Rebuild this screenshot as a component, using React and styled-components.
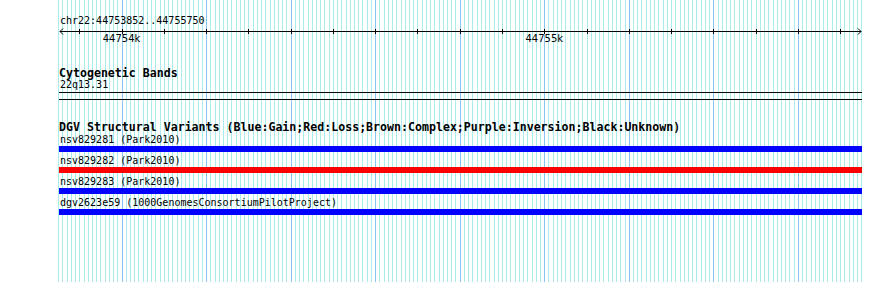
import React from "react";
import styled, { createGlobalStyle } from "styled-components";

const START = 44753852;
const END = 44755750;
const LEFT = 59;
const SCALE = 0.4227;

const toX = (bp) => LEFT + (bp - START) * SCALE;

const minorLines = [];
for (let bp = 44753850; bp <= 44755750; bp += 10) {
  minorLines.push(Math.round(toX(bp)));
}
const majorLines = [];
for (let bp = 44754000; bp <= 44755750; bp += 200) {
  majorLines.push(Math.round(toX(bp)));
}
const ticks = [];
for (let bp = 44753900; bp <= 44755700; bp += 100) {
  ticks.push(Math.round(toX(bp)) - LEFT);
}
const tickLabels = [
  { text: "44754k", bp: 44754000 },
  { text: "44755k", bp: 44755000 },
];

const variants = [
  { id: "nsv829281", source: "Park2010", color: "#0000ff" },
  { id: "nsv829282", source: "Park2010", color: "#ff0000" },
  { id: "nsv829283", source: "Park2010", color: "#0000ff" },
  { id: "dgv2623e59", source: "1000GenomesConsortiumPilotProject", color: "#0000ff" },
];

const GlobalStyle = createGlobalStyle`
  html, body {
    margin: 0;
    padding: 0;
    background: #ffffff;
  }
  body {
    font-family: "DejaVu Sans Mono", "Liberation Mono", monospace;
    color: #000000;
  }
`;

function Grid() {
  return (
    <GridSvg width="890" height="282">
      {minorLines.map((x) => (
        <line key={"m" + x} x1={x + 0.5} x2={x + 0.5} y1="0" y2="282" stroke="#a9ecee" />
      ))}
      {majorLines.map((x) => (
        <line key={"M" + x} x1={x + 0.5} x2={x + 0.5} y1="0" y2="282" stroke="#86c6f2" />
      ))}
    </GridSvg>
  );
}

function Ruler() {
  return (
    <RulerBox>
      <SmallText>chr22:44753852..44755750</SmallText>
      <AxisSvg width="803" height="6">
        <line x1="1" x2="802" y1="4.5" y2="4.5" stroke="#000" />
        <polyline points="4,1.5 1,4.5 4,7.5" fill="none" stroke="#000" />
        <polyline points="799,1.5 802,4.5 799,7.5" fill="none" stroke="#000" />
        {ticks.map((x) => (
          <line key={x} x1={x + 0.5} x2={x + 0.5} y1="2" y2="7" stroke="#000" />
        ))}
      </AxisSvg>
      <TickRow>
        {tickLabels.map((t) => (
          <TickLabel key={t.text} style={{ left: toX(t.bp) - LEFT }}>
            {t.text}
          </TickLabel>
        ))}
      </TickRow>
    </RulerBox>
  );
}

export default function App() {
  return (
    <>
      <GlobalStyle />
      <Canvas>
        <Grid />
        <Content>
          <Ruler />
          <Track $top={22}>
            <TrackTitle>Cytogenetic Bands</TrackTitle>
            <SmallText>22q13.31</SmallText>
            <Rule $gap={1} />
            <Rule $gap={6} />
          </Track>
          <Track $top={21}>
            <TrackTitle>
              DGV Structural Variants (Blue:Gain;Red:Loss;Brown:Complex;Purple:Inversion;Black:Unknown)
            </TrackTitle>
            <Rows>
              {variants.map((v) => (
                <Row key={v.id}>
                  <SmallText>
                    {v.id} ({v.source})
                  </SmallText>
                  <Bar $color={v.color} />
                </Row>
              ))}
            </Rows>
          </Track>
        </Content>
      </Canvas>
    </>
  );
}

const Canvas = styled.div`
  position: relative;
  width: 890px;
  height: 282px;
  overflow: hidden;
  background: #ffffff;
`;

const GridSvg = styled.svg`
  position: absolute;
  left: 0;
  top: 0;
  display: block;
`;

const Content = styled.div`
  position: relative;
  margin-left: ${LEFT}px;
  width: 803px;
  display: flex;
  flex-direction: column;
`;

const RulerBox = styled.div`
  height: 45px;
  padding-top: 15px;
  box-sizing: border-box;
  display: flex;
  flex-direction: column;
`;

const SmallText = styled.div`
  font-size: 10px;
  line-height: 12px;
  height: 12px;
  white-space: nowrap;
  padding-left: 1px;
`;

const AxisSvg = styled.svg`
  display: block;
  overflow: visible;
`;

const TickRow = styled.div`
  position: relative;
  height: 12px;
`;

const TickLabel = styled.span`
  position: absolute;
  top: 0;
  transform: translateX(-50%);
  font-family: "DejaVu Sans", "Liberation Sans", sans-serif;
  font-size: 10px;
  line-height: 12px;
  white-space: nowrap;
`;

const Track = styled.div`
  margin-top: ${(p) => p.$top}px;
  display: flex;
  flex-direction: column;
`;

const TrackTitle = styled.div`
  font-size: 11.6px;
  font-weight: bold;
  line-height: 12px;
  height: 12px;
  white-space: nowrap;
`;

const Rule = styled.div`
  margin-top: ${(p) => p.$gap}px;
  height: 1px;
  background: #000000;
`;

const Rows = styled.div`
  margin-top: 1px;
  display: flex;
  flex-direction: column;
  gap: 3px;
`;

const Row = styled.div`
  display: flex;
  flex-direction: column;
`;

const Bar = styled.div`
  height: 6px;
  background: ${(p) => p.$color};
`;
